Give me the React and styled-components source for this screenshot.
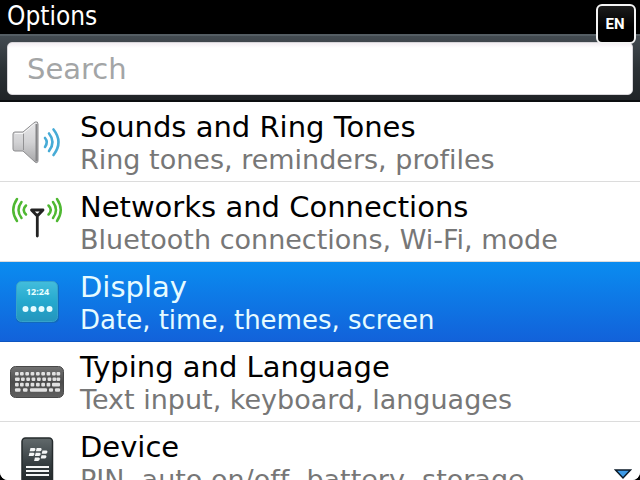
import styled, { createGlobalStyle } from "styled-components";

const GlobalStyle = createGlobalStyle`
  * {
    box-sizing: border-box;
  }
  body {
    margin: 0;
    background-color: #000;
    font-family: "DejaVu Sans", Verdana, sans-serif;
    font-variant-ligatures: none;
  }
`;

const Container = styled.div`
  position: relative;
  height: 100vh;
  display: flex;
  flex-direction: column;
  overflow: hidden;
`;

const Header = styled.header`
  flex-shrink: 0;
  height: 34px;
  padding: 0px 7px;
  background-color: #000;
`;

const Title = styled.h1`
  margin: 0;
  color: white;
  font-family: "DejaVu Sans Condensed", "DejaVu Sans", sans-serif;
  font-stretch: condensed;
  font-size: 26px;
  font-weight: 400;
  line-height: 32px;
`;

const Language = styled.button`
  position: absolute;
  top: 4px;
  right: 4px;
  width: 40px;
  height: 40px;
  padding: 0px 2px 0px 0px;
  border: 2px solid #f4f4f4;
  border-radius: 6px;
  background: linear-gradient(#1c1c1c, #000 60%);
  color: white;
  font-family: Roboto, sans-serif;
  font-size: 15px;
  font-weight: 700;
`;

const SearchBar = styled.form`
  flex-shrink: 0;
  padding: 6px 7px 5px;
  border-top: 2px solid #555e64;
  border-bottom: 2px solid #0c0e10;
  background: linear-gradient(#434b51, #2c3236 50%, #202427);
`;

const SearchInput = styled.input`
  display: block;
  width: 100%;
  height: 53px;
  padding: 0px 19px;
  border: 1px solid #d8d6da;
  border-radius: 5px;
  background: linear-gradient(#f3eef3, #fff 5px);
  color: #222;
  font-family: inherit;
  font-size: 29px;
  outline: none;
  &::placeholder {
    color: #a3a5a6;
    opacity: 1;
  }
`;

const List = styled.ul`
  flex: 1;
  min-height: 0;
  margin: 0;
  padding: 0;
  list-style: none;
  overflow: hidden;
  background-color: white;
  border-radius: 0px 0px 8px 8px;
`;

const Item = styled.a`
  display: flex;
  height: 80px;
  border-bottom: 1px solid ${(props) => (props.$active ? "#0d55c0" : "#dcdcdc")};
  background: ${(props) =>
    props.$active ? "linear-gradient(#0a8cf0, #1262da)" : "white"};
  color: ${(props) => (props.$active ? "#e6fbff" : "#000")};
  text-decoration: none;
  white-space: nowrap;
`;

const IconBox = styled.span`
  flex-shrink: 0;
  width: 80px;
  svg {
    display: block;
  }
`;

const Info = styled.span`
  padding-top: 8px;
`;

const Name = styled.span`
  display: block;
  font-size: 29px;
  line-height: 34px;
`;

const Desc = styled.span`
  display: block;
  color: ${(props) => (props.$active ? "#e6fbff" : "#777")};
  font-size: ${(props) => (props.$active ? "26px" : "27px")};
  line-height: 32px;
`;

const More = styled.svg`
  position: absolute;
  right: 8px;
  bottom: 0;
`;

const SoundIcon = () => (
  <svg width="80" height="79" viewBox="0 0 80 79">
    <defs>
      <linearGradient id="cone" x1="0" y1="0" x2="0" y2="1">
        <stop offset="0" stopColor="#e8e8ea" />
        <stop offset="0.5" stopColor="#d2d2d4" />
        <stop offset="1" stopColor="#a6a6a8" />
      </linearGradient>
    </defs>
    <path
      d="M15 30H23L35 20Q38 19 38 22V58Q38 62 35 60L23 49H15Q13 49 13 47V32Q13 30 15 30Z"
      fill="url(#cone)"
      stroke="#8c8c8e"
      strokeWidth="1"
    />
    <path d="M23.5 31V48" stroke="#919193" strokeWidth="1" />
    <path d="M36.5 22V59" stroke="#858587" strokeWidth="2" />
    <path d="M15 31.5H23L34 22" fill="none" stroke="#f8f8f8" strokeWidth="1" />
    <g fill="none" stroke="#47abd6" strokeWidth="2.6" strokeLinecap="round">
      <path d="M45 36Q48.5 40 45 45" />
      <path d="M49 31.5Q56 40 49 49" />
      <path d="M53.5 27.5Q63.5 40 53.5 53" />
    </g>
  </svg>
);

const NetworkIcon = () => (
  <svg width="80" height="79" viewBox="0 0 80 79">
    <g fill="none" stroke="#4fb832" strokeWidth="2.5" strokeLinecap="round">
      <path d="M17 17Q9.500 28 17 39" />
      <path d="M21.500 20Q15.500 28 21.500 36" />
      <path d="M26 23.500Q21.500 28 26 32.500" />
      <path d="M57 17Q64.500 28 57 39" />
      <path d="M53 20Q59 28 53 36" />
      <path d="M48.500 23.500Q53 28 48.500 32.500" />
    </g>
    <path
      d="M31.500 28H43L37.300 34Z M37.300 33V54"
      fill="none"
      stroke="#222"
      strokeWidth="2.8"
      strokeLinejoin="round"
      strokeLinecap="round"
    />
  </svg>
);

const DisplayIcon = () => (
  <svg width="80" height="79" viewBox="0 0 80 79">
    <defs>
      <linearGradient id="screen" x1="0" y1="0" x2="0" y2="1">
        <stop offset="0" stopColor="#43bddc" />
        <stop offset="0.5" stopColor="#25a9ce" />
        <stop offset="1" stopColor="#2495bd" />
      </linearGradient>
    </defs>
    <rect x="16" y="20" width="43" height="41" rx="5" fill="#1268a5" opacity="0.6" />
    <rect x="16.500" y="19.500" width="41" height="40" rx="5" fill="url(#screen)" stroke="#36a3cb" />
    <text
      x="37.500"
      y="33"
      textAnchor="middle"
      fill="#e9ffff"
      fontFamily="Open Sans, sans-serif"
      fontSize="9"
      fontWeight="700"
    >
      12:24
    </text>
    <g fill="#e4fbff">
      <circle cx="25.500" cy="47" r="3" />
      <circle cx="33.500" cy="47" r="3" />
      <circle cx="41.500" cy="47" r="3" />
      <circle cx="49.500" cy="47" r="3" />
    </g>
  </svg>
);

const keyRows = [
  [15, 20, 25.3, 30.6, 36, 41.3, 46.6, 52, 56.5],
  [21, 26.3, 31.6, 37, 42.3, 47.6, 52.5, 56.5],
  [15, 20, 25.3, 30.6, 36, 41.3, 46.6],
];

const KeyboardIcon = () => (
  <svg width="80" height="79" viewBox="0 0 80 79">
    <defs>
      <linearGradient id="board" x1="0" y1="0" x2="0" y2="1">
        <stop offset="0" stopColor="#737373" />
        <stop offset="0.5" stopColor="#4c4c4c" />
        <stop offset="1" stopColor="#606060" />
      </linearGradient>
    </defs>
    <rect x="10.5" y="24.5" width="53" height="31" rx="5" fill="url(#board)" stroke="#484848" />
    <g fill="#e2e2e2">
      {keyRows.map((row, i) =>
        row.map((x) => (
          <rect key={`${i}-${x}`} x={x} y={30 + i * 5.4} width="3.7" height="3.6" rx="1" />
        ))
      )}
      <rect x="15" y="35.4" width="4.7" height="3.6" rx="1" />
      <rect x="52" y="40.8" width="8" height="3.6" rx="1" />
      <rect x="15" y="46.2" width="5.5" height="3.6" rx="1" />
      <rect x="23" y="46.2" width="4.5" height="3.6" rx="1" />
      <rect x="30" y="46.2" width="17" height="3.6" rx="1" />
      <rect x="49" y="46.2" width="4" height="3.6" rx="1" />
      <rect x="55" y="46.2" width="5" height="3.6" rx="1" />
    </g>
  </svg>
);

const DeviceIcon = () => (
  <svg width="80" height="79" viewBox="0 0 80 79">
    <defs>
      <linearGradient id="phone" x1="0" y1="0" x2="0" y2="1">
        <stop offset="0" stopColor="#626a6c" />
        <stop offset="0.5" stopColor="#333b3e" />
        <stop offset="1" stopColor="#171c1e" />
      </linearGradient>
    </defs>
    <rect x="22" y="16" width="30.500" height="54" rx="3.500" fill="url(#phone)" stroke="#252b2d" strokeWidth="1.5" />
    <g fill="#f4f6f6">
      <path d="M30.5 26h4q1.5 .5 .8 2t-2 1.300h-3.600z" />
      <path d="M36.7 26h4q1.5 .5 .8 2t-2 1.300h-3.600z" />
      <path d="M29.5 30.800h4q1.5 .5 .8 2t-2 1.300h-3.600z" />
      <path d="M35.7 30.800h4q1.5 .5 .8 2t-2 1.300h-3.600z" />
      <path d="M42.5 28.500h4q1.5 .5 .8 2t-2 1.300h-3.600z" />
      <path d="M41.5 33.300h4q1.5 .5 .8 2t-2 1.300h-3.600z" />
      <path d="M34.9 35.600h4q1.5 .5 .8 2t-2 1.300h-3.600z" />
      <rect x="26" y="44" width="23" height="2" />
      <rect x="26" y="48" width="23" height="2" />
      <rect x="26" y="52" width="23" height="2" />
    </g>
  </svg>
);

const options = [
  {
    id: "sounds",
    name: "Sounds and Ring Tones",
    desc: "Ring tones, reminders, profiles",
    Icon: SoundIcon,
  },
  {
    id: "networks",
    name: "Networks and Connections",
    desc: "Bluetooth connections, Wi-Fi, mode",
    Icon: NetworkIcon,
  },
  {
    id: "display",
    name: "Display",
    desc: "Date, time, themes, screen",
    Icon: DisplayIcon,
    active: true,
  },
  {
    id: "typing",
    name: "Typing and Language",
    desc: "Text input, keyboard, languages",
    Icon: KeyboardIcon,
  },
  {
    id: "device",
    name: "Device",
    desc: "PIN, auto on/off, battery, storage",
    Icon: DeviceIcon,
  },
];

const App = () => {
  return (
    <>
      <GlobalStyle />
      <Container>
        <Header>
          <Title>Options</Title>
        </Header>
        <SearchBar role="search" onSubmit={(e) => e.preventDefault()}>
          <SearchInput type="text" placeholder="Search" aria-label="Search" />
        </SearchBar>
        <List>
          {options.map(({ id, name, desc, Icon, active }) => (
            <li key={id}>
              <Item href={`#${id}`} $active={active}>
                <IconBox>
                  <Icon />
                </IconBox>
                <Info>
                  <Name>{name}</Name>
                  <Desc $active={active}>{desc}</Desc>
                </Info>
              </Item>
            </li>
          ))}
        </List>
        <Language type="button">EN</Language>
        <More width="18" height="11" viewBox="0 0 18 11">
          <path d="M1.5 1H16.500L9 9Z" fill="#3d9be8" stroke="#0b1a28" strokeWidth="1.5" />
        </More>
      </Container>
    </>
  );
};

export default App;
